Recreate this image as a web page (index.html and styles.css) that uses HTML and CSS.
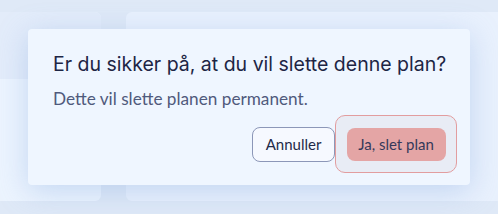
FILE: index.html
```html
<!DOCTYPE html>
<html lang="da">
<head>
    <meta charset="UTF-8">
    <meta name="viewport" content="width=device-width, initial-scale=1.0">
    <title>Slet plan</title>
    <link rel="stylesheet" href="styles.css">
</head>
<body>
    <div class="page">
        <div class="card card-side">
            <div class="card-head"></div>
        </div>
        <div class="card card-main"></div>
    </div>

    <div class="dialog">
        <h2 class="dialog-title">Er du sikker på, at du vil slette denne plan?</h2>
        <p class="dialog-text">Dette vil slette planen permanent.</p>
        <div class="dialog-actions">
            <button class="btn btn-cancel">Annuller</button>
            <div class="focus-ring">
                <button class="btn btn-danger">Ja, slet plan</button>
            </div>
        </div>
    </div>
</body>
</html>
```

FILE: styles.css
```css
body, html {
    margin: 0;
    padding: 0;
    height: 100%;
    overflow: hidden;
    background: #dfe9f7;
    font-family: 'Lato', sans-serif;
}
.page {
    display: grid;
    grid-template-columns: 101px 1fr;
    gap: 25px;
    padding: 12px 0 13px 0;
    height: 189px;
    overflow: hidden;
}
.card {
    background: #e9f1fd;
    border-radius: 0 6px 6px 0;
    overflow: hidden;
}
.card-side {
    background: #ecf4fe;
}
.card-head {
    height: 67px;
    background: #e3ecfa;
}
.card-main {
    border-radius: 6px 0 0 6px;
}
.dialog {
    position: absolute;
    left: 28px;
    top: 29px;
    width: 442px;
    height: 156px;
    box-sizing: border-box;
    padding: 22px 25px 0 25px;
    background: #eff6ff;
    border-radius: 4px;
    box-shadow: 0 6px 30px rgba(120, 160, 220, 0.35);
}
.dialog-title {
    margin: 0;
    font-family: 'Inter', sans-serif;
    font-weight: 400;
    font-size: 19.5px;
    line-height: 26px;
    white-space: nowrap;
    color: #1d2545;
}
.dialog-text {
    margin: 11px 0 0 0;
    font-size: 17.2px;
    line-height: 22px;
    color: #4f5a7c;
}
.dialog-actions {
    display: flex;
    justify-content: flex-end;
    align-items: center;
    margin-top: 5px;
    margin-right: -12px;
}
.btn {
    font-family: 'Lato', sans-serif;
    font-size: 15px;
    color: #222a48;
    border-radius: 8px;
    cursor: pointer;
}
.btn-cancel {
    width: 83px;
    height: 35px;
    background: #f6f9ff;
    border: 1px solid #8c97b8;
}
.focus-ring {
    display: flex;
    align-items: center;
    justify-content: center;
    width: 122px;
    height: 58px;
    box-sizing: border-box;
    border: 1px solid #e29d9f;
    border-radius: 10px;
    background: #e8ecf5;
}
.btn-danger {
    width: 99px;
    height: 33px;
    background: #e4a5a5;
    border: none;
    color: #35395a;
}
```
